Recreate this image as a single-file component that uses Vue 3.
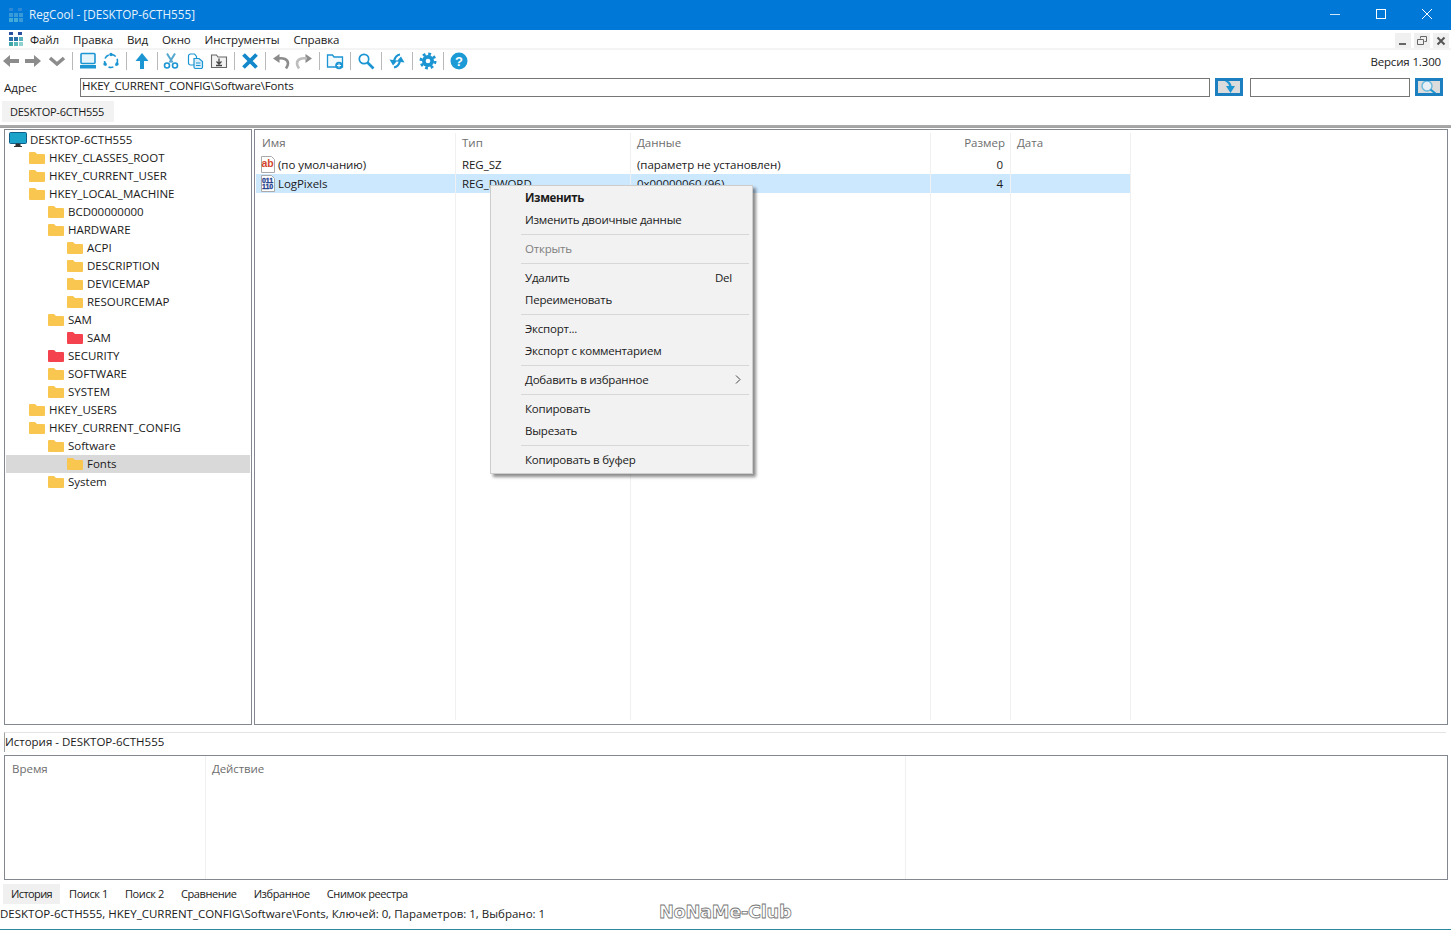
<template>
  <div class="window">
    <div class="titlebar">
      <svg class="app-icon dim" width="16" height="16" viewBox="0 0 16 16">
        <rect x="1" y="1" width="4" height="3" fill="#3d8fd6" />
        <rect x="10" y="1" width="4" height="3" fill="#3d8fd6" />
        <rect x="1" y="6" width="4" height="4" fill="#4ba6d8" /><rect x="6" y="6" width="4" height="4" fill="#4ba6d8" /><rect x="11" y="6" width="4" height="4" fill="#4ba6d8" />
        <rect x="1" y="11" width="4" height="4" fill="#58bcd8" /><rect x="6" y="11" width="4" height="4" fill="#58bcd8" /><rect x="11" y="11" width="4" height="4" fill="#4ba6d8" />
      </svg>
      <span class="title-text">RegCool - [DESKTOP-6CTH555]</span>
      <div class="win-buttons">
        <svg width="46" height="30" viewBox="0 0 46 30"><path d="M18 14.500h10" stroke="#cfe6fa" fill="none" /></svg>
        <svg width="46" height="30" viewBox="0 0 46 30"><rect x="18.500" y="9.500" width="9" height="9" stroke="#fff" fill="none" /></svg>
        <svg width="46" height="30" viewBox="0 0 46 30"><path d="M18 9l10 10M28 9L18 19" stroke="#fff" fill="none" /></svg>
      </div>
    </div>

    <div class="menubar">
      <svg class="app-icon" width="16" height="16" viewBox="0 0 16 16">
        <rect x="1" y="1" width="4" height="3" fill="#2a4f9e" />
        <rect x="10" y="1" width="4" height="3" fill="#2a4f9e" />
        <rect x="1" y="6" width="4" height="4" fill="#2a6fa8" /><rect x="6" y="6" width="4" height="4" fill="#2a6fa8" /><rect x="11" y="6" width="4" height="4" fill="#5ab0b8" />
        <rect x="1" y="11" width="4" height="4" fill="#3fa5a8" /><rect x="6" y="11" width="4" height="4" fill="#5ab8b8" /><rect x="11" y="11" width="4" height="4" fill="#8fd0d0" />
      </svg>
      <span v-for="m in menus" :key="m" class="menu-item">{{ m }}</span>
      <div class="mdi-buttons">
        <span class="mdi-btn"><svg width="10" height="10" viewBox="0 0 10 10"><path d="M1 8h7" stroke="#666" stroke-width="2" fill="none" /></svg></span>
        <span class="mdi-btn"><svg width="10" height="10" viewBox="0 0 10 10"><path d="M3.500 2.500V.5h6v5h-2M.5 3.500h6v5h-6z" stroke="#666" fill="none" /></svg></span>
        <span class="mdi-btn"><svg width="10" height="10" viewBox="0 0 10 10"><path d="M1.500 1.500l7 7M8.500 1.500l-7 7" stroke="#555" stroke-width="2" fill="none" /></svg></span>
      </div>
    </div>

    <div class="toolbar">
      <!-- back / forward / history -->
      <svg class="tool" viewBox="0 0 18 18"><path d="M1 9l7-6v4h9v4H8v4z" fill="#8c8c8c" /></svg>
      <svg class="tool gap4" viewBox="0 0 18 18"><path d="M17 9l-7-6v4H1v4h9v4z" fill="#8c8c8c" /></svg>
      <svg class="tool gap6" viewBox="0 0 18 18"><path d="M2 6l7 6 7-6" fill="none" stroke="#8c8c8c" stroke-width="3.600" /></svg>
      <i class="sep"></i>
      <!-- computer / refresh -->
      <svg class="tool" viewBox="0 0 18 18"><rect x="2" y="1.500" width="14" height="10" rx="1" fill="#e6f4fb" stroke="#1c95d3" stroke-width="1.600" /><rect x="1" y="13" width="16" height="3.500" fill="#1c95d3" /></svg>
      <svg class="tool gap5" viewBox="0 0 18 18"><circle cx="9" cy="9" r="6.500" fill="none" stroke="#1c95d3" stroke-width="1.600" stroke-dasharray="5 2.500" /><circle cx="9" cy="2.500" r="1.700" fill="#1c95d3" /><circle cx="3" cy="12" r="1.700" fill="#1c95d3" /><circle cx="15" cy="12" r="1.700" fill="#1c95d3" /></svg>
      <i class="sep"></i>
      <svg class="tool" viewBox="0 0 18 18"><path d="M9 1l6.500 8H11v8H7V9H2.500z" fill="#1c95d3" /></svg>
      <i class="sep"></i>
      <!-- cut / copy / paste -->
      <svg class="tool back2" viewBox="0 0 18 18"><path d="M5 1.500l5.500 9M13 1.500l-5.500 9" stroke="#55a7cf" stroke-width="2" fill="none" /><circle cx="5" cy="13.500" r="2.500" fill="none" stroke="#1c95d3" stroke-width="1.600" /><circle cx="13" cy="13.500" r="2.500" fill="none" stroke="#1c95d3" stroke-width="1.600" /></svg>
      <svg class="tool gap7" viewBox="0 0 18 18"><path d="M1.500 4a2 2 0 012-2h4l2 2.500V11a2 2 0 01-2 2h-4a2 2 0 01-2-2z" fill="#fff" stroke="#1c95d3" stroke-width="1.200" /><path d="M7 6.500h5l3.500 3V15a1.500 1.500 0 01-1.500 1.500H8.500A1.500 1.500 0 017 15z" fill="#d9eef9" stroke="#1c95d3" stroke-width="1.200" /><path d="M9 11h4.500M9 13.500h4.500" stroke="#1c95d3" /></svg>
      <svg class="tool gap5" viewBox="0 0 18 18"><path d="M1.500 15.500V3h5L8 5h8.500v10.500z" fill="#f2f2f2" stroke="#666" stroke-width="1.100" /><path d="M9 6.500v5M6.500 9.500L9 12l2.500-2.500M6 13.500h6" stroke="#444" stroke-width="1.300" fill="none" /></svg>
      <i class="sep"></i>
      <svg class="tool" viewBox="0 0 18 18"><path d="M2.500 2.500l13 13M15.500 2.500l-13 13" stroke="#1288cb" stroke-width="3.800" fill="none" /></svg>
      <i class="sep"></i>
      <!-- undo / redo -->
      <svg class="tool" viewBox="0 0 18 18"><path d="M1 6.500L7.500 2v9z" fill="#8c8c8c" /><path d="M6 6.500c5-1 10 .5 10 5 0 2-1 3.500-2 5" fill="none" stroke="#8c8c8c" stroke-width="2.600" /></svg>
      <svg class="tool gap5" viewBox="0 0 18 18"><path d="M17 6.500L10.500 2v9z" fill="#8c8c8c" /><path d="M12 6.500c-5-1-10 .5-10 5 0 2 1 3.500 2 5" fill="none" stroke="#bdbdbd" stroke-width="2.600" /></svg>
      <i class="sep"></i>
      <svg class="tool" viewBox="0 0 18 18"><path d="M1.500 15V3h5L8 5h8.500v10z" fill="#f3fafd" stroke="#1c95d3" stroke-width="1.300" /><circle cx="13" cy="13.500" r="3.800" fill="#1c95d3" /><path d="M13 11.500v4M11 13.500h4" stroke="#fff" /></svg>
      <i class="sep"></i>
      <svg class="tool" viewBox="0 0 18 18"><circle cx="7" cy="7" r="4.700" fill="none" stroke="#1c95d3" stroke-width="1.700" /><path d="M10.500 10.500l6 6" stroke="#1c95d3" stroke-width="2.600" /></svg>
      <i class="sep"></i>
      <!-- sync -->
      <svg class="tool" viewBox="0 0 18 18"><path d="M12 2.500C9 3 7 5 6 9" fill="none" stroke="#1c95d3" stroke-width="2.200" /><path d="M1.500 7.500l8 1-4.500 5z" fill="#1c95d3" /><path d="M6 15.500c3-.5 5-2.500 6-6.500" fill="none" stroke="#1c95d3" stroke-width="2.200" /><path d="M16.500 10.500l-8-1 4.500-5z" fill="#1c95d3" /></svg>
      <i class="sep"></i>
      <!-- settings -->
      <svg class="tool" viewBox="0 0 18 18"><circle cx="9" cy="9" r="6" fill="#1c95d3" /><circle cx="9" cy="9" r="7" fill="none" stroke="#1c95d3" stroke-width="3" stroke-dasharray="2.750 2.750" /><circle cx="9" cy="9" r="2.300" fill="#fff" /></svg>
      <i class="sep"></i>
      <svg class="tool" viewBox="0 0 18 18"><circle cx="9" cy="9" r="8.500" fill="#1c9ad6" /><text x="9" y="13.500" text-anchor="middle" class="help-q">?</text></svg>
      <span class="version">Версия 1.300</span>
    </div>

    <div class="addressbar">
      <span class="addr-label">Адрес</span>
      <div class="addr-input">HKEY_CURRENT_CONFIG\Software\Fonts</div>
      <span class="go-btn"><svg width="16" height="14" viewBox="0 0 16 14"><path d="M2 0c5 0 8 2 8.500 6H14l-4.500 7L5 6h3C8 4 6 2 2 0z" fill="#1c95d3" /></svg></span>
      <div class="search-input"></div>
      <span class="go-btn"><svg width="22" height="14" viewBox="0 0 22 14"><circle cx="9" cy="6" r="5" fill="#e8f0f5" stroke="#6ab8de" stroke-width="1.400" /><path d="M12.500 9.500l5 4" stroke="#1c95d3" stroke-width="2" /></svg></span>
    </div>

    <div class="doc-tabs"><span class="doc-tab">DESKTOP-6CTH555</span></div>
    <div class="double-rule"></div>

    <div class="panes">
      <div class="tree">
        <div v-for="node in tree" :key="node.label + node.level" class="tree-row" :class="{ selected: node.selected }" :style="{ paddingLeft: 4 + node.level * 19 + 'px' }">
          <svg v-if="node.level === 0" class="node-icon root" width="18" height="16" viewBox="0 0 18 16"><rect x="0.500" y="0.500" width="17" height="11" rx="1" fill="#1ba3c9" stroke="#0d5f8a" /><path d="M7 12h4v2H7zM5 14.500h8" fill="#333" stroke="#333" /></svg>
          <svg v-else class="node-icon" width="16" height="14" viewBox="0 0 16 14"><path d="M1 1h5l2 2h7a1 1 0 011 1v8a1 1 0 01-1 1H1a1 1 0 01-1-1V2a1 1 0 011-1z" :fill="node.red ? '#f4434f' : '#f9c64f'" /></svg>
          <span>{{ node.label }}</span>
        </div>
      </div>

      <div class="list">
        <div v-for="(col, i) in columns" :key="col.title" class="col" :style="{ width: col.width + 'px' }">
          <div class="col-head" :class="{ right: col.right }">{{ col.title }}</div>
          <div class="cell" :class="{ right: col.right }">
            <svg v-if="i === 0" class="val-icon" width="16" height="17" viewBox="0 0 16 17"><path d="M1.500.5h10l3 3v13h-13z" fill="#fff" stroke="#aaa" /><text x="7.500" y="11" text-anchor="middle" class="ab">ab</text></svg>
            {{ col.cells[0] }}
          </div>
          <div class="cell sel" :class="{ right: col.right }">
            <svg v-if="i === 0" class="val-icon" width="16" height="17" viewBox="0 0 16 17"><path d="M1.500.5h10l3 3v13h-13z" fill="#fff" stroke="#aaa" /><text x="7.500" y="8" text-anchor="middle" class="bin">011</text><text x="7.500" y="14" text-anchor="middle" class="bin">110</text></svg>
            {{ col.cells[1] }}
          </div>
        </div>

        <div class="context-menu">
          <template v-for="(item, i) in contextMenu" :key="i">
            <div v-if="item.sep" class="ctx-sep"></div>
            <div v-else class="ctx-item" :class="{ bold: item.bold, off: item.off }">
              <span>{{ item.label }}</span>
              <span v-if="item.key" class="ctx-key">{{ item.key }}</span>
              <svg v-if="item.sub" class="ctx-arrow" width="6" height="9" viewBox="0 0 6 9"><path d="M1 .5l4 4-4 4" fill="none" stroke="#444" /></svg>
            </div>
          </template>
        </div>
      </div>
    </div>

    <div class="history-title">История - DESKTOP-6CTH555</div>
    <div class="history">
      <div class="hist-col w1">Время</div>
      <div class="hist-col w2">Действие</div>
    </div>

    <div class="bottom-tabs">
      <span v-for="(t, i) in bottomTabs" :key="t" class="bottom-tab" :class="{ active: i === 0 }">{{ t }}</span>
    </div>
    <div class="status">DESKTOP-6CTH555, HKEY_CURRENT_CONFIG\Software\Fonts, Ключей: 0, Параметров: 1, Выбрано: 1</div>
    <div class="watermark">NoNaMe-Club</div>
  </div>
</template>

<script setup>
const menus = ['Файл', 'Правка', 'Вид', 'Окно', 'Инструменты', 'Справка']

const tree = [
  { label: 'DESKTOP-6CTH555', level: 0 },
  { label: 'HKEY_CLASSES_ROOT', level: 1 },
  { label: 'HKEY_CURRENT_USER', level: 1 },
  { label: 'HKEY_LOCAL_MACHINE', level: 1 },
  { label: 'BCD00000000', level: 2 },
  { label: 'HARDWARE', level: 2 },
  { label: 'ACPI', level: 3 },
  { label: 'DESCRIPTION', level: 3 },
  { label: 'DEVICEMAP', level: 3 },
  { label: 'RESOURCEMAP', level: 3 },
  { label: 'SAM', level: 2 },
  { label: 'SAM', level: 3, red: true },
  { label: 'SECURITY', level: 2, red: true },
  { label: 'SOFTWARE', level: 2 },
  { label: 'SYSTEM', level: 2 },
  { label: 'HKEY_USERS', level: 1 },
  { label: 'HKEY_CURRENT_CONFIG', level: 1 },
  { label: 'Software', level: 2 },
  { label: 'Fonts', level: 3, selected: true },
  { label: 'System', level: 2 },
]

const columns = [
  { title: 'Имя', width: 200, cells: ['(по умолчанию)', 'LogPixels'] },
  { title: 'Тип', width: 175, cells: ['REG_SZ', 'REG_DWORD'] },
  { title: 'Данные', width: 300, cells: ['(параметр не установлен)', '0x00000060 (96)'] },
  { title: 'Размер', width: 80, right: true, cells: ['0', '4'] },
  { title: 'Дата', width: 120, cells: ['', ''] },
]

const contextMenu = [
  { label: 'Изменить', bold: true },
  { label: 'Изменить двоичные данные' },
  { sep: true },
  { label: 'Открыть', off: true },
  { sep: true },
  { label: 'Удалить', key: 'Del' },
  { label: 'Переименовать' },
  { sep: true },
  { label: 'Экспорт...' },
  { label: 'Экспорт с комментарием' },
  { sep: true },
  { label: 'Добавить в избранное', sub: true },
  { sep: true },
  { label: 'Копировать' },
  { label: 'Вырезать' },
  { sep: true },
  { label: 'Копировать в буфер' },
]

const bottomTabs = ['История', 'Поиск 1', 'Поиск 2', 'Сравнение', 'Избранное', 'Снимок реестра']
</script>

<style>
html, body { margin: 0; background: #fff; overflow: hidden; }
</style>

<style scoped>
.window {
  position: relative;
  width: 1451px;
  height: 930px;
  box-sizing: border-box;
  border-bottom: 1px solid #2b8a9e;
  background: #fff;
  font-family: "Open Sans", "Noto Sans", sans-serif;
  font-size: 11.5px;
  color: #1a1a1a;
  overflow: hidden;
  display: flex;
  flex-direction: column;
}

.titlebar {
  height: 30px;
  background: #0078d7;
  display: flex;
  align-items: center;
  color: #e6f2fb;
  flex: none;
}
.app-icon { margin-left: 8px; flex: none; }
.app-icon.dim { opacity: .75; }
.title-text { margin-left: 5px; font-size: 11.7px; padding-bottom: 2px; }
.win-buttons { margin-left: auto; display: flex; margin-right: 1px; }
.win-buttons svg { display: block; }

.menubar {
  height: 18px;
  display: flex;
  align-items: center;
  border-bottom: 2px solid #f4f4f4;
  flex: none;
}
.menu-item { margin-left: 14px; letter-spacing: -.12px; }
.menu-item:first-of-type { margin-left: 6px; }
.mdi-buttons { margin-left: auto; display: flex; gap: 3px; margin-right: 2px; margin-top: 3px; }
.mdi-btn {
  width: 16px;
  height: 15px;
  background: #f0f0f0;
  display: flex;
  align-items: center;
  justify-content: center;
}

.toolbar {
  height: 22px;
  display: flex;
  align-items: center;
  padding-left: 2px;
  flex: none;
}
.tool { width: 18px; height: 18px; flex: none; }
.gap4 { margin-left: 4px; }
.gap5 { margin-left: 5px; }
.gap6 { margin-left: 6px; }
.gap7 { margin-left: 7px; }
.back2 { margin-left: -2px; }
.sep {
  width: 1px;
  height: 18px;
  background: #b9b9b9;
  margin: 0 6px;
  flex: none;
}
.help-q { font: bold 13px "Liberation Sans", sans-serif; fill: #fff; }
.version { margin-left: auto; margin-right: 10px; letter-spacing: -.15px; }

.addressbar {
  height: 26px;
  margin-top: 2px;
  display: flex;
  align-items: center;
  padding-left: 4px;
  flex: none;
}
.addr-label { width: 76px; flex: none; }
.addr-input {
  width: 1127px;
  height: 17px;
  border: 1px solid #767676;
  padding-left: 1px;
  line-height: 13px;
  margin-right: 4px;
  letter-spacing: -.18px;
  flex: none;
}
.go-btn {
  width: 28px;
  height: 18px;
  box-sizing: border-box;
  border: 3px solid #1c7fbf;
  background: #dcdcdc;
  margin-left: 1px;
  display: flex;
  align-items: center;
  justify-content: center;
  overflow: hidden;
  flex: none;
}
.search-input {
  width: 158px;
  height: 17px;
  border: 1px solid #767676;
  margin: 0 4px 0 7px;
  flex: none;
}

.doc-tabs { height: 24px; padding: 1px 0 0 2px; box-sizing: border-box; flex: none; }
.doc-tab {
  display: inline-block;
  height: 21px;
  line-height: 21px;
  padding: 0 10px 0 8px;
  background: #f2f2f2;
  font-size: 11px;
  letter-spacing: -.25px;
}
.double-rule {
  height: 0;
  margin: 1px 0 0;
  border-top: 2px solid #a8a8a8;
  border-bottom: 1px solid #a0a0a0;
  flex: none;
}

.panes {
  height: 596px;
  margin-top: 1px;
  padding: 0 3px 0 4px;
  display: flex;
  gap: 2px;
  flex: none;
}
.tree {
  width: 244px;
  border: 1px solid #828790;
  padding: 1px;
  flex: none;
}
.tree-row {
  height: 18px;
  box-sizing: border-box;
  padding-bottom: 1px;
  display: flex;
  align-items: center;
  white-space: nowrap;
}
.tree-row.selected { background: #d9d9d9; }
.node-icon { margin-right: 4px; flex: none; }
.node-icon.root { margin: 0 3px 0 -1px; }

.list {
  position: relative;
  flex: 1;
  border: 1px solid #828790;
  padding: 3px 0 0 1px;
  display: flex;
  align-items: stretch;
}
.col {
  box-sizing: border-box;
  border-right: 1px solid #f0f0f0;
  flex: none;
  margin-bottom: 4px;
}
.col-head {
  height: 20px;
  line-height: 20px;
  padding: 0 5px 0 6px;
  color: #6d6d6d;
  margin-bottom: 2px;
}
.right { text-align: right; }
.cell {
  height: 19px;
  box-sizing: border-box;
  padding: 0 5px 1px 6px;
  white-space: nowrap;
  letter-spacing: -.06px;
  display: flex;
  align-items: center;
}
.cell.right { justify-content: flex-end; padding-right: 7px; }
.cell.sel { background: #cce8ff; }
.val-icon { margin: 0 2px 0 -2px; flex: none; }
.ab { font: bold 10.500px "Liberation Sans", sans-serif; fill: #d2452c; }
.bin { font: bold 7px "Liberation Sans", sans-serif; fill: #1f3f8f; stroke: #1f3f8f; stroke-width: .3px; }

.context-menu {
  position: absolute;
  left: 235px;
  top: 55px;
  width: 263px;
  box-sizing: border-box;
  background: #f2f2f2;
  border: 1px solid #cdcdcd;
  box-shadow: 3px 3px 3px rgba(0, 0, 0, .45);
  padding: 1px 1px 2px;
  letter-spacing: -.22px;
}
.ctx-item {
  height: 22px;
  line-height: 22px;
  padding-left: 33px;
  position: relative;
  white-space: nowrap;
}
.ctx-item.bold { font-weight: 700; letter-spacing: -.35px; }
.ctx-item.off { color: #808080; }
.ctx-key { position: absolute; right: 19px; }
.ctx-arrow { position: absolute; right: 10px; top: 6px; }
.ctx-sep {
  height: 1px;
  margin: 3px 2px 3px 29px;
  background: #d7d7d7;
}

.history-title {
  margin: 7px 5px 0 4px;
  height: 19px;
  line-height: 18px;
  border-left: 1px solid #a0a0a0;
  border-top: 1px solid #e3e3e3;
  flex: none;
}
.history {
  height: 123px;
  margin: 3px 3px 0 4px;
  border: 1px solid #828790;
  display: flex;
  flex: none;
  color: #6d6d6d;
}
.hist-col {
  box-sizing: border-box;
  border-right: 1px solid #f0f0f0;
  padding: 5px 0 0 7px;
}
.w1 { width: 201px; }
.w2 { width: 700px; padding-left: 6px; letter-spacing: -.1px; }

.bottom-tabs {
  height: 21px;
  margin-top: 4px;
  padding-left: 3px;
  display: flex;
  flex: none;
  font-size: 11px;
  letter-spacing: -.4px;
}
.bottom-tab { height: 20px; line-height: 20px; padding: 0 8px; margin-right: 1px; }
.bottom-tab.active { background: #f0f0f0; letter-spacing: -.6px; }
.status {
  height: 18px;
  line-height: 18px;
  white-space: nowrap;
  flex: none;
}
.watermark {
  position: absolute;
  left: 659px;
  top: 901px;
  font: 700 17.800px "DejaVu Sans", sans-serif;
  letter-spacing: -.3px;
  color: #fff;
  -webkit-text-stroke: .8px #777;
}
</style>
